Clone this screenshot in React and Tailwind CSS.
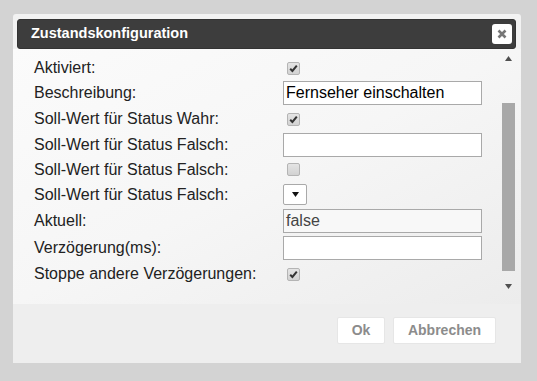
import React from "react"

const font = { fontFamily: '"Liberation Sans", Arial, sans-serif' }

function Check({ checked }) {
  return (
    <span className="ml-[4px] flex h-[13px] w-[13px] items-center justify-center rounded-[2px] border border-[#b4b4b4] bg-gradient-to-b from-[#e4e4e4] to-[#d2d2d2]">
      {checked && (
        <svg width="11" height="11" viewBox="0 0 11 11">
          <path d="M2.2 5.8 L4.4 8 L8.8 2.6" fill="none" stroke="#333" strokeWidth="2" />
        </svg>
      )}
    </span>
  )
}

function TextInput({ value, readOnly }) {
  return (
    <div
      className={
        "flex h-[24px] w-[199px] items-center border border-[#a9a9a9] pl-[2px] text-[16px] " +
        (readOnly ? "bg-[#f8f8f8] text-[#444]" : "bg-white text-black")
      }
    >
      {value}
    </div>
  )
}

function Select() {
  return (
    <div className="flex h-[21px] w-[24px] items-center justify-center rounded-[2px] border border-[#a9a9a9] bg-white">
      <svg width="7" height="5" viewBox="0 0 7 5">
        <polygon points="0,0 7,0 3.5,5" fill="#111" />
      </svg>
    </div>
  )
}

const rows = [
  { label: "Aktiviert:", h: "h-[24px]", field: <Check checked /> },
  { label: "Beschreibung:", h: "h-[26px]", field: <TextInput value="Fernseher einschalten" /> },
  { label: "Soll-Wert für Status Wahr:", h: "h-[26px]", field: <Check checked /> },
  { label: "Soll-Wert für Status Falsch:", h: "h-[25px]", field: <TextInput value="" /> },
  { label: "Soll-Wert für Status Falsch:", h: "h-[25px]", field: <Check /> },
  { label: "Soll-Wert für Status Falsch:", h: "h-[25px]", field: <Select /> },
  { label: "Aktuell:", h: "h-[27px]", field: <TextInput value="false" readOnly /> },
  { label: "Verzögerung(ms):", h: "h-[27px]", field: <TextInput value="" /> },
  { label: "Stoppe andere Verzögerungen:", h: "h-[26px]", field: <Check checked /> },
]

export default function App() {
  return (
    <div className="h-[381px] w-[537px] bg-[#d3d3d3] pl-[13px] pt-[14px]" style={font}>
      <div className="flex h-[349px] w-[508px] flex-col rounded-[3px] bg-[#f2f2f2]">
        {/* title bar */}
        <div className="ml-[4px] mr-[5px] mt-[5px] flex h-[30px] items-center justify-between rounded-[3px] border border-[#333] bg-[#3d3d3d] pl-[13px] pr-[3px]">
          <span className="text-[14.5px] font-bold text-white">Zustandskonfiguration</span>
          <button className="flex h-[20px] w-[20px] items-center justify-center rounded-[3px] bg-white">
            <svg width="10" height="10" viewBox="0 0 10 10">
              <path d="M1.5 1.5 L8.5 8.5 M8.5 1.5 L1.5 8.5" stroke="#777" strokeWidth="2.6" />
            </svg>
          </button>
        </div>

        {/* content */}
        <div className="flex h-[255px] bg-gradient-to-br from-[#fbfbfb] via-[#f6f6f6] to-[#ececec]">
          <div className="flex-1 pl-[21px] pt-[7px]">
            {rows.map((r, i) => (
              <div key={i} className={"flex items-center " + r.h}>
                <span className="w-[249px] text-[16px] leading-[18px] text-[#222]">{r.label}</span>
                {r.field}
              </div>
            ))}
          </div>
          <div className="mr-[4px] flex w-[17px] flex-col items-center pt-[7px]">
            <svg width="7" height="5" viewBox="0 0 7 5">
              <polygon points="3.5,0 7,5 0,5" fill="#505050" />
            </svg>
            <div className="mt-[42px] h-[168px] w-[13px] bg-[#a8a8a8]" />
            <svg className="mt-[13px]" width="7" height="5" viewBox="0 0 7 5">
              <polygon points="0,0 7,0 3.5,5" fill="#505050" />
            </svg>
          </div>
        </div>

        {/* footer */}
        <div className="flex flex-1 items-start justify-end gap-[8px] bg-[#eeeeee] pr-[25px] pt-[13px]">
          <button className="h-[27px] w-[48px] rounded-[2px] border border-[#e6e6e6] bg-white text-[14px] font-bold text-[#8c8c8c]">
            Ok
          </button>
          <button className="h-[27px] w-[103px] rounded-[2px] border border-[#e6e6e6] bg-white text-[14px] font-bold text-[#8c8c8c]">
            Abbrechen
          </button>
        </div>
      </div>
    </div>
  )
}
